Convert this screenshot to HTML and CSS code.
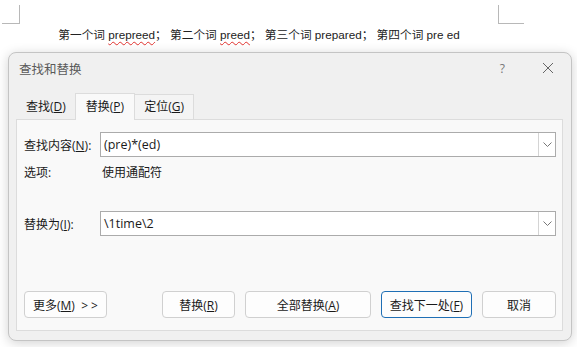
FILE: index.html
```html
<!DOCTYPE html>
<html lang="zh-CN">
<head>
  <meta charset="UTF-8" />
  <title>查找和替换</title>
  <link rel="stylesheet" href="styles.css">
</head>
<body>
  <div class="doc">
    <div class="corner corner-left"></div>
    <div class="doc-body">
      <p class="doc-line">第一个词 <span class="typo">prepreed</span>； 第二个词 <span class="typo">preed</span>； 第三个词 prepared； 第四个词 pre ed</p>
    </div>
    <div class="corner corner-right"></div>
  </div>

  <div class="dialog">
    <div class="titlebar">
      <span class="title">查找和替换</span>
      <span class="help">?</span>
      <span class="close">
        <svg width="12" height="12" viewBox="0 0 12 12"><path d="M1 1L11 11M11 1L1 11" stroke="#666" stroke-width="1" fill="none"/></svg>
      </span>
    </div>

    <div class="tabs">
      <div class="tab">查找(<u>D</u>)</div>
      <div class="tab active">替换(<u>P</u>)</div>
      <div class="tab side">定位(<u>G</u>)</div>
    </div>

    <div class="panel">
      <div class="field">
        <label class="label">查找内容(<u>N</u>):</label>
        <div class="combo">
          <span class="combo-text">(pre)*(ed)</span>
          <span class="combo-btn">
            <svg width="9" height="5" viewBox="0 0 9 5"><path d="M0.5 0.5L4.5 4.5L8.5 0.5" stroke="#777" fill="none"/></svg>
          </span>
        </div>
      </div>
      <div class="options">
        <span class="label">选项:</span>
        <span class="option-value">使用通配符</span>
      </div>
      <div class="field replace">
        <label class="label">替换为(<u>I</u>):</label>
        <div class="combo">
          <span class="combo-text">\1time\2</span>
          <span class="combo-btn">
            <svg width="9" height="5" viewBox="0 0 9 5"><path d="M0.5 0.5L4.5 4.5L8.5 0.5" stroke="#777" fill="none"/></svg>
          </span>
        </div>
      </div>

      <div class="buttons">
        <button class="btn more">更多(<u>M</u>) &nbsp;&gt; &gt;</button>
        <div class="spacer"></div>
        <button class="btn w-replace">替换(<u>R</u>)</button>
        <button class="btn w-all">全部替换(<u>A</u>)</button>
        <button class="btn w-next default">查找下一处(<u>F</u>)</button>
        <button class="btn w-cancel">取消</button>
      </div>
    </div>
  </div>
</body>
</html>
```

FILE: styles.css
```css
body {
  margin: 0;
  background: #fff;
  color: #1a1a1a;
  font-family: "Open Sans", "Noto Sans CJK SC", sans-serif;
  font-size: 12px;
  width: 577px;
  height: 347px;
  overflow: hidden;
}

.doc {
  display: flex;
  padding-left: 2px;
  height: 52px;
}

.corner {
  margin-top: 5px;
  height: 18px;
  border-bottom: 1px solid #b8b8b8;
}

.corner-left {
  width: 17px;
  border-right: 1px solid #b8b8b8;
}

.corner-right {
  width: 25px;
  border-left: 1px solid #b8b8b8;
}

.doc-body {
  width: 478px;
  text-align: center;
}

.doc-line {
  margin: 27px 0 0;
  font-family: "Liberation Sans", "Noto Sans CJK SC", sans-serif;
  font-size: 11.7px;
  line-height: 16px;
  color: #222;
}

.typo {
  text-decoration: underline wavy #e0302c;
  text-decoration-thickness: 1px;
  text-underline-offset: 2px;
}

.dialog {
  margin-left: 8px;
  width: 547px;
  height: 278px;
  background: #f0f0f0;
  border: 1px solid #c4c4c4;
  border-radius: 8px;
  box-shadow: 0 2px 12px rgba(0, 0, 0, 0.18);
  display: flex;
  flex-direction: column;
  padding: 0 8px 9px 7px;
}

.titlebar {
  display: flex;
  align-items: center;
  height: 30px;
  padding-left: 3px;
}

.title {
  flex: 1;
  color: #5a5a5a;
  font-size: 12.5px;
}

.help {
  color: #777;
  font-size: 12px;
  margin-right: 37px;
}

.close {
  display: flex;
  margin-right: 9px;
}

.tabs {
  display: flex;
  align-items: flex-end;
  height: 36px;
  margin-left: 1px;
}

.tab {
  height: 24px;
  line-height: 24px;
  padding: 0 9px;
  font-size: 12px;
}

.tab.active {
  height: 26px;
  line-height: 26px;
  padding: 0 10px;
  background: #f9f9f9;
  border: 1px solid #dcdcdc;
  border-bottom: none;
  margin-bottom: -1px;
  position: relative;
}

.tab.side {
  background: #f4f4f4;
  border: 1px solid #dcdcdc;
  border-left: none;
  border-bottom: none;
}

.panel {
  flex: 1;
  background: #f9f9f9;
  border: 1px solid #dcdcdc;
  padding: 12px 6px 12px 7px;
  display: flex;
  flex-direction: column;
}

.field {
  display: flex;
  align-items: center;
  height: 25px;
}

.label {
  width: 76px;
  flex-shrink: 0;
}

.combo {
  flex: 1;
  display: flex;
  height: 25px;
  box-sizing: border-box;
  border: 1px solid #ababab;
  background: #fff;
}

.combo-text {
  flex: 1;
  padding-left: 3px;
  line-height: 23px;
  font-size: 12.5px;
}

.combo-btn {
  width: 16px;
  border-left: 1px solid #d4d4d4;
  display: flex;
  align-items: center;
  justify-content: center;
}

.options {
  display: flex;
  align-items: center;
  height: 30px;
}

.option-value {
  padding-left: 2px;
}

.replace {
  margin-top: 24px;
}

.buttons {
  margin-top: auto;
  display: flex;
  gap: 10px;
}

.spacer {
  flex: 1;
}

.btn {
  height: 27px;
  font-family: inherit;
  font-size: 12px;
  color: #1a1a1a;
  background: #fdfdfd;
  border: 1px solid #d0d0d0;
  border-radius: 4px;
  padding: 0;
}

.more {
  width: 83px;
}

.w-replace {
  width: 73px;
}

.w-all {
  width: 126px;
}

.w-next {
  width: 91px;
}

.w-cancel {
  width: 74px;
}

.btn.default {
  border-color: #1f6fb5;
}
```
